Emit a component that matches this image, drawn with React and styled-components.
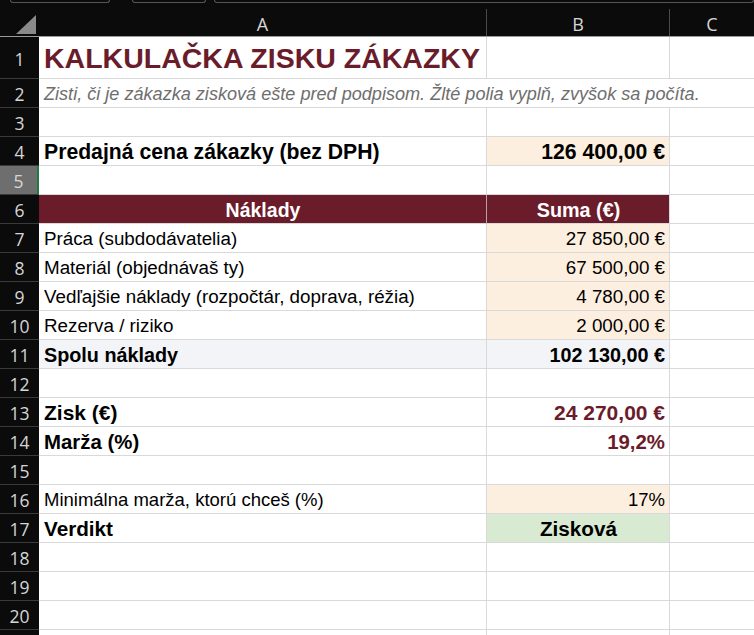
import React from "react";
import styled, { createGlobalStyle } from "styled-components";

const GlobalStyle = createGlobalStyle`
  html, body {
    margin: 0;
    background: #0b0b0b;
    overflow: hidden;
  }
  #root {
    width: 754px;
    height: 635px;
    overflow: hidden;
  }
`;

const COLS = "39px 448px 183px 1fr";
const MAROON = "#6b1c2a";
const PEACH = "#fdefdf";

const Sheet = styled.div`
  width: 754px;
  height: 635px;
  background: #0b0b0b;
  display: flex;
  flex-direction: column;
  overflow: hidden;
`;

const TopStrip = styled.div`
  flex: none;
  height: 9px;
  display: flex;
  padding-left: 10px;
  box-sizing: border-box;
`;

const TabStub = styled.div`
  width: ${(p) => p.$w || "auto"};
  margin-right: ${(p) => p.$gap || "0"};
  height: 2px;
  border: 1px solid #555;
  border-top: none;
  border-radius: 0 0 4px 4px;
  flex: ${(p) => (p.$grow ? 1 : "none")};
`;

const HeadRow = styled.div`
  flex: none;
  display: grid;
  grid-template-columns: ${COLS};
  height: 27px;
  border-bottom: 1px solid #9a9a9a;
`;

const Corner = styled.div`
  display: flex;
  align-items: flex-end;
  justify-content: flex-end;
  padding: 0 3px 2px 0;
`;

const ColHead = styled.div`
  display: flex;
  align-items: center;
  justify-content: center;
  color: #d6d6d6;
  font-family: "Open Sans", "Noto Sans", sans-serif;
  font-size: 18px;
  border-right: 1px solid #4a4a4a;
  padding-top: 2px;
  &:last-child {
    border-right: none;
  }
`;

const Row = styled.div`
  display: grid;
  grid-template-columns: ${COLS};
  height: ${(p) => p.$h}px;
  flex: none;
`;

const RowHead = styled.div`
  display: flex;
  align-items: center;
  justify-content: center;
  color: #d6d6d6;
  font-family: "Open Sans", "Noto Sans", sans-serif;
  font-size: 17.5px;
  background: ${(p) => (p.$sel ? "#6e6e6e" : "#0b0b0b")};
  border-bottom: 1px solid #3a3a3a;
  border-right: ${(p) => (p.$sel ? "2px solid #1f7a4a" : "none")};
  padding-top: 2px;
  box-sizing: border-box;
`;

const Cell = styled.div`
  display: flex;
  align-items: center;
  justify-content: ${(p) =>
    p.$align === "right" ? "flex-end" : p.$align === "center" ? "center" : "flex-start"};
  grid-column: ${(p) => p.$span || "auto"};
  background: ${(p) => p.$bg || "#fff"};
  color: ${(p) => p.$color || "#000"};
  font-family: "Liberation Sans", Arial, sans-serif;
  font-size: ${(p) => p.$size || 18.8}px;
  font-weight: ${(p) => (p.$bold ? 700 : 400)};
  font-style: ${(p) => (p.$italic ? "italic" : "normal")};
  border-right: 1px solid ${(p) => p.$line || "#d9d9d9"};
  border-bottom: 1px solid #d9d9d9;
  padding: 2px 4px 0 5px;
  box-sizing: border-box;
  white-space: nowrap;
  overflow: visible;
  min-width: 0;
  &:last-child {
    border-right: none;
  }
`;

const rows = [
  {
    n: 1,
    h: 42,
    a: { t: "KALKULAČKA ZISKU ZÁKAZKY", bold: true, color: MAROON, size: 28.5 },
  },
  {
    n: 2,
    span: {
      t: "Zisti, či je zákazka zisková ešte pred podpisom. Žlté polia vyplň, zvyšok sa počíta.",
      italic: true,
      color: "#6e6e6e",
      size: 18.1,
    },
  },
  { n: 3 },
  {
    n: 4,
    a: { t: "Predajná cena zákazky (bez DPH)", bold: true, size: 21.2 },
    b: { t: "126 400,00 €", bold: true, bg: PEACH, align: "right", size: 21.2 },
  },
  { n: 5, sel: true },
  {
    n: 6,
    a: { t: "Náklady", bold: true, color: "#fff", bg: MAROON, align: "center", line: "#b9a0a4", size: 19.5 },
    b: { t: "Suma (€)", bold: true, color: "#fff", bg: MAROON, align: "center", size: 19.8 },
  },
  { n: 7, a: { t: "Práca (subdodávatelia)" }, b: { t: "27 850,00 €", bg: PEACH, align: "right" } },
  { n: 8, a: { t: "Materiál (objednávaš ty)" }, b: { t: "67 500,00 €", bg: PEACH, align: "right" } },
  {
    n: 9,
    a: { t: "Vedľajšie náklady (rozpočtár, doprava, réžia)" },
    b: { t: "4 780,00 €", bg: PEACH, align: "right" },
  },
  { n: 10, a: { t: "Rezerva / riziko" }, b: { t: "2 000,00 €", bg: PEACH, align: "right" } },
  {
    n: 11,
    a: { t: "Spolu náklady", bold: true, bg: "#f3f4f8", size: 19.8 },
    b: { t: "102 130,00 €", bold: true, bg: "#f3f4f8", align: "right", size: 19.8 },
  },
  { n: 12 },
  {
    n: 13,
    a: { t: "Zisk (€)", bold: true, size: 21 },
    b: { t: "24 270,00 €", bold: true, color: MAROON, align: "right", size: 21 },
  },
  {
    n: 14,
    a: { t: "Marža (%)", bold: true, size: 20.4 },
    b: { t: "19,2%", bold: true, color: MAROON, align: "right", size: 20.4 },
  },
  { n: 15 },
  {
    n: 16,
    a: { t: "Minimálna marža, ktorú chceš (%)", size: 18.5 },
    b: { t: "17%", bg: PEACH, align: "right", size: 18.5 },
  },
  {
    n: 17,
    a: { t: "Verdikt", bold: true, size: 20.7 },
    b: { t: "Zisková", bold: true, bg: "#d9ead3", align: "center", size: 20.7 },
  },
  { n: 18 },
  { n: 19 },
  { n: 20 },
  { n: 21, hideNum: true },
];

function DataCell({ c = {}, span }) {
  return (
    <Cell
      $span={span}
      $bg={c.bg}
      $color={c.color}
      $bold={c.bold}
      $italic={c.italic}
      $size={c.size}
      $align={c.align}
      $line={c.line}
    >
      {c.t}
    </Cell>
  );
}

export default function App() {
  return (
    <Sheet>
      <GlobalStyle />
      <TopStrip>
        <TabStub $w="98px" $gap="22px" />
        <TabStub $w="72px" $gap="8px" />
        <TabStub $grow />
      </TopStrip>
      <HeadRow>
        <Corner>
          <svg width="20" height="19" viewBox="0 0 20 19">
            <polygon points="20,0 20,19 0,19" fill="#8a8a8a" />
          </svg>
        </Corner>
        <ColHead>A</ColHead>
        <ColHead>B</ColHead>
        <ColHead>C</ColHead>
      </HeadRow>
      {rows.map((r) => (
        <Row key={r.n} $h={r.h || 29}>
          <RowHead $sel={r.sel}>{r.hideNum ? "" : r.n}</RowHead>
          {r.span ? (
            <DataCell c={r.span} span="span 3" />
          ) : (
            <>
              <DataCell c={r.a} />
              <DataCell c={r.b} />
              <DataCell />
            </>
          )}
        </Row>
      ))}
    </Sheet>
  );
}
